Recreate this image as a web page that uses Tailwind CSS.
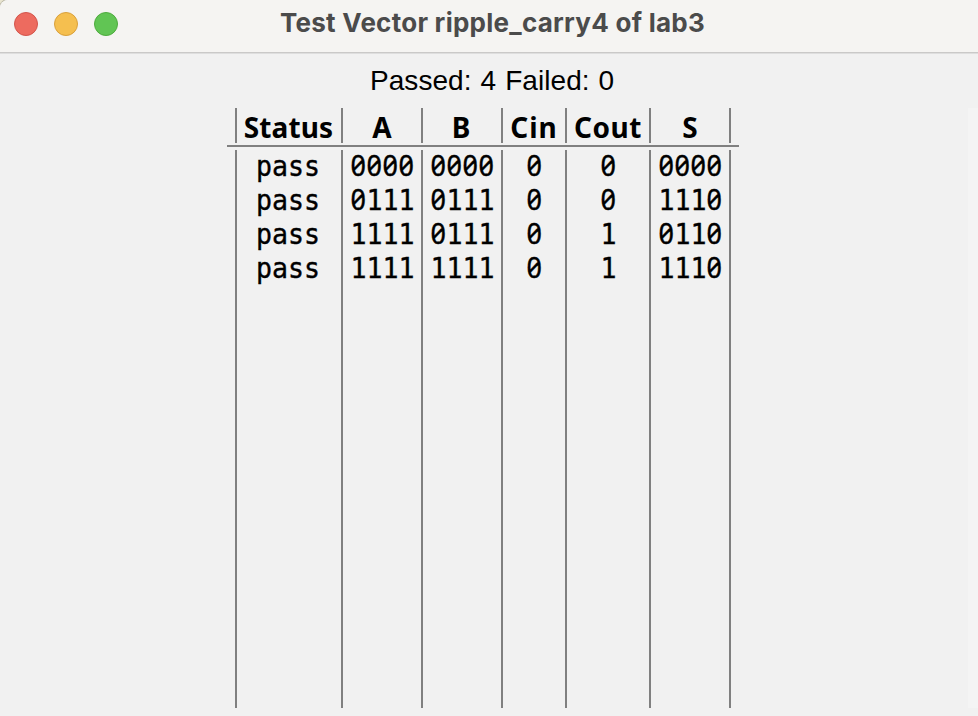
<!DOCTYPE html>
<html lang="en">
<head>
<meta charset="utf-8">
<title>Test Vector ripple_carry4 of lab3</title>
<script src="https://cdn.jsdelivr.net/npm/@tailwindcss/browser@4"></script>
</head>
<body class="bg-[#e9e5d0]">
<div class="flex h-[716px] w-[978px] flex-col overflow-hidden rounded-tl-[8px] bg-[#f1f1f1] text-black shadow-[0_0_0_1px_#b9b6a5]">
  <header class="relative flex h-[54px] shrink-0 items-center border-b border-[#dedede] bg-[#f5f4f2] shadow-[inset_0_-1px_0_#cac9c8]">
    <div class="flex gap-4 pb-[5px] pl-[14px]">
      <span class="size-6 rounded-full border border-[#d3554c] bg-[#ed6b5f]"></span>
      <span class="size-6 rounded-full border border-[#d9a03c] bg-[#f5bf4f]"></span>
      <span class="size-6 rounded-full border border-[#4eab3e] bg-[#61c554]"></span>
    </div>
    <h1 class="absolute left-[280px] top-[7px] whitespace-nowrap font-['Inter',sans-serif] text-[26px] font-bold leading-8 tracking-[0.25px] text-[#4b4b4b]">Test Vector ripple_carry4 of lab3</h1>
  </header>
  <p class="h-[54px] shrink-0 pl-[370px] pt-[11px] font-['Liberation_Sans',sans-serif] text-[28px] leading-8 tracking-[0.05px] [word-spacing:1.2px] whitespace-nowrap">Passed: 4 Failed: 0</p>
  <main class="flex h-[600px] shrink-0 justify-between pl-[227px]">
    <div class="flex w-[512px] flex-col">
      <div class="ml-2 grid h-[35px] w-[496px] grid-cols-[106px_80px_80px_64px_84px_80px] grid-rows-[35px] border-r-2 border-[#808080] text-center font-['Noto_Sans',sans-serif] text-[28px] font-bold leading-[38px] *:border-l-2 *:border-[#808080]">
        <span class="pr-px tracking-[0.15px]">Status</span><span>A</span><span class="pr-0.5">B</span><span class="tracking-[1px]">Cin</span><span class="tracking-[0.5px]">Cout</span><span>S</span>
      </div>
      <div class="mt-[2px] h-[2px] shrink-0 bg-[#808080]"></div>
      <div class="ml-2 mt-[3px] grid h-[558px] w-[496px] grid-cols-[106px_80px_80px_64px_84px_80px] border-r-2 border-[#808080] pt-0 text-center font-['DejaVu_Sans_Mono',monospace] text-[26.58px] leading-[34px] *:border-l-2 *:border-[#808080] [&_p]:h-[34px] [&_p]:origin-[50%_26px] [&_p]:scale-y-[1.07] [&_p]:[-webkit-text-stroke:0.35px_#000] [&_b]:font-['Noto_Sans'] [&_b]:text-[27px] [&_b]:leading-0 [&_b]:font-normal [&_b]:tracking-[0.56px] [&_b]:[font-feature-settings:'zero']">
        <div class="pr-0.5"><p>pass</p><p>pass</p><p>pass</p><p>pass</p></div>
        <div class="pl-px"><p><b>0000</b></p><p><b>0</b>111</p><p>1111</p><p>1111</p></div>
        <div class="pl-px"><p><b>0000</b></p><p><b>0</b>111</p><p><b>0</b>111</p><p>1111</p></div>
        <div class="pl-px"><p><b>0</b></p><p><b>0</b></p><p><b>0</b></p><p><b>0</b></p></div>
        <div class="pl-px"><p><b>0</b></p><p><b>0</b></p><p>1</p><p>1</p></div>
        <div class="pl-px"><p><b>0000</b></p><p>111<b>0</b></p><p><b>0</b>11<b>0</b></p><p>111<b>0</b></p></div>
      </div>
    </div>
    <div class="w-[10px] bg-[#f4f4f4]"></div>
  </main>
</div>
</body>
</html>
